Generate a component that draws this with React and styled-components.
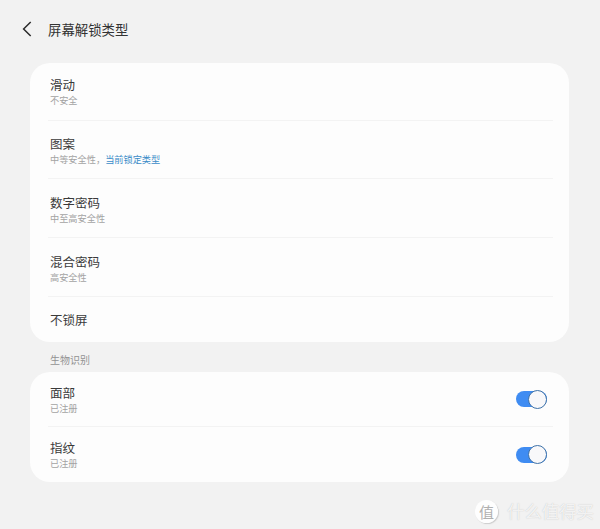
import React from 'react'
import styled, { createGlobalStyle } from 'styled-components'

const GlobalStyle = createGlobalStyle`
  html, body {
    margin: 0;
    padding: 0;
    background: #f2f2f2;
    font-family: "Noto Sans CJK SC", "Liberation Sans", sans-serif;
  }
`

const Page = styled.div`
  position: relative;
  width: 600px;
  height: 529px;
  overflow: hidden;
  background: #f2f2f2;
  box-sizing: border-box;
  padding: 0 31px 0 30px;
`

const Header = styled.div`
  display: flex;
  align-items: center;
  height: 63px;
  padding: 0 0 5px 0;
  box-sizing: border-box;
  margin-left: -9px;
`

const Back = styled.svg`
  width: 12px;
  height: 16px;
  margin-right: 15px;
`

const Title = styled.div`
  font-size: 13.4px;
  line-height: 20px;
  color: #333;
`

const Card = styled.div`
  background: #fdfdfd;
  border-radius: 20px;
  padding: 0 16px 0 20px;
`

const Row = styled.div`
  display: flex;
  align-items: center;
  justify-content: space-between;
  height: ${p => p.$h}px;
  box-sizing: border-box;
  border-bottom: ${p => (p.$last ? 'none' : '1px solid #f3f3f3')};
  margin-left: -2px;
  padding-left: 2px;
  padding-top: ${p => p.$pt || 0}px;
`

const RowText = styled.div`
  display: flex;
  flex-direction: column;
`

const RowTitle = styled.div`
  font-size: 12.5px;
  line-height: 17px;
  color: #3a3a3a;
`

const RowSub = styled.div`
  font-size: 9.2px;
  line-height: 13px;
  color: #a3a3a3;
  margin-top: 1px;
`

const Current = styled.span`
  color: #3a8cc8;
`

const Section = styled.div`
  font-size: 10px;
  line-height: 14px;
  color: #939393;
  padding: 11px 0 5px 20px;
`

const Track = styled.div`
  position: relative;
  width: 31px;
  height: 16px;
  margin-right: 6px;
  border-radius: 8px;
  background: #3f8cf2;
`

const Knob = styled.div`
  position: absolute;
  right: 0;
  top: -1.5px;
  width: 19px;
  height: 19px;
  box-sizing: border-box;
  border-radius: 50%;
  background: #f8f8fa;
  border: 1px solid #3f72a8;
`

const Watermark = styled.div`
  position: absolute;
  left: 475px;
  top: 499px;
  display: flex;
  align-items: center;
  gap: 9px;
  color: rgba(255, 255, 255, 0.8);
  text-shadow: 0 0 1px rgba(140, 140, 140, 0.5);
`

const Badge = styled.div`
  width: 23px;
  height: 23px;
  border-radius: 50%;
  background: rgba(255, 255, 255, 0.9);
  box-shadow: 1px 1px 1px rgba(150, 150, 150, 0.4);
  color: #b0b0b0;
  font-size: 15px;
  line-height: 23px;
  text-align: center;
  text-shadow: none;
`

const Brand = styled.div`
  font-size: 17.4px;
  line-height: 24px;
  white-space: nowrap;
`

const Toggle = () => (
  <Track>
    <Knob />
  </Track>
)

const App = () => (
  <Page>
    <GlobalStyle />
    <Header>
      <Back viewBox="0 0 12 16">
        <path d="M9.7 1 L2.6 8 L9.7 15" fill="none" stroke="#2b2b2b" strokeWidth="1.5" />
      </Back>
      <Title>屏幕解锁类型</Title>
    </Header>
    <Card>
      <Row $h={58}>
        <RowText>
          <RowTitle>滑动</RowTitle>
          <RowSub>不安全</RowSub>
        </RowText>
      </Row>
      <Row $h={58} $pt={2}>
        <RowText>
          <RowTitle>图案</RowTitle>
          <RowSub>中等安全性，<Current>当前锁定类型</Current></RowSub>
        </RowText>
      </Row>
      <Row $h={59} $pt={2}>
        <RowText>
          <RowTitle>数字密码</RowTitle>
          <RowSub>中至高安全性</RowSub>
        </RowText>
      </Row>
      <Row $h={59} $pt={2}>
        <RowText>
          <RowTitle>混合密码</RowTitle>
          <RowSub>高安全性</RowSub>
        </RowText>
      </Row>
      <Row $h={45} $last>
        <RowTitle>不锁屏</RowTitle>
      </Row>
    </Card>
    <Section>生物识别</Section>
    <Card>
      <Row $h={55}>
        <RowText>
          <RowTitle>面部</RowTitle>
          <RowSub>已注册</RowSub>
        </RowText>
        <Toggle />
      </Row>
      <Row $h={55} $last>
        <RowText>
          <RowTitle>指纹</RowTitle>
          <RowSub>已注册</RowSub>
        </RowText>
        <Toggle />
      </Row>
    </Card>
    <Watermark>
      <Badge>值</Badge>
      <Brand>什么值得买</Brand>
    </Watermark>
  </Page>
)

export default App
